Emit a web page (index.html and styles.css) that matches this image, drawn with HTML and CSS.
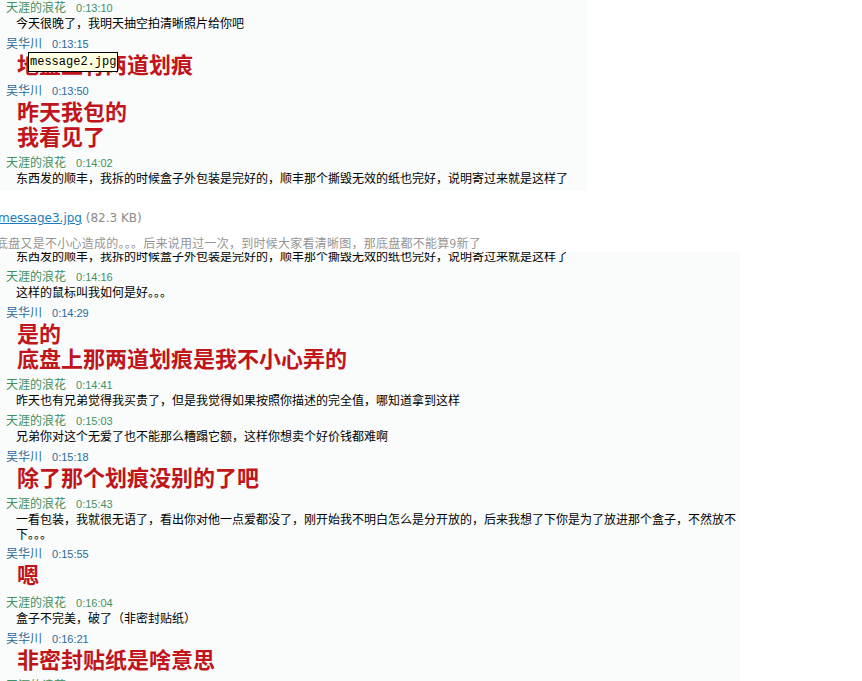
FILE: index.html
```html
<!DOCTYPE html>
<html lang="zh-CN">
<head>
  <meta charset="UTF-8">
  <title>message2.jpg / message3.jpg</title>
  <link rel="stylesheet" href="styles.css">
</head>
<body>

  <div class="post">

    <!-- 第一张截图 message2.jpg -->
    <div class="chat chat-first">
      <div class="item">
        <div class="head her">天涯的浪花<span class="time">0:13:10</span></div>
        <div class="msg">今天很晚了，我明天抽空拍清晰照片给你吧</div>
      </div>
      <div class="item item-big">
        <div class="head me">吴华川<span class="time">0:13:15</span></div>
        <div class="big">地盘上有两道划痕</div>
      </div>
      <div class="item item-big">
        <div class="head me">吴华川<span class="time">0:13:50</span></div>
        <div class="big">昨天我包的</div>
        <div class="big">我看见了</div>
      </div>
      <div class="item">
        <div class="head her">天涯的浪花<span class="time">0:14:02</span></div>
        <div class="msg">东西发的顺丰，我拆的时候盒子外包装是完好的，顺丰那个撕毁无效的纸也完好，说明寄过来就是这样了</div>
      </div>

      <div class="tip">message2.jpg</div>
    </div>

    <!-- 附件信息 -->
    <div class="attach">
      <a href="#" class="attach-link">message3.jpg</a> <span class="attach-size">(82.3 KB)</span>
    </div>
    <p class="note">底盘又是不小心造成的。。。后来说用过一次，到时候大家看清晰图，那底盘都不能算9新了</p>

    <!-- 第二张截图 message3.jpg -->
    <div class="chat chat-second">
      <div class="item item-cut">
        <div class="msg">东西发的顺丰，我拆的时候盒子外包装是完好的，顺丰那个撕毁无效的纸也完好，说明寄过来就是这样了</div>
      </div>
      <div class="item">
        <div class="head her">天涯的浪花<span class="time">0:14:16</span></div>
        <div class="msg">这样的鼠标叫我如何是好。。。</div>
      </div>
      <div class="item item-big">
        <div class="head me">吴华川<span class="time">0:14:29</span></div>
        <div class="big">是的</div>
        <div class="big">底盘上那两道划痕是我不小心弄的</div>
      </div>
      <div class="item">
        <div class="head her">天涯的浪花<span class="time">0:14:41</span></div>
        <div class="msg">昨天也有兄弟觉得我买贵了，但是我觉得如果按照你描述的完全值，哪知道拿到这样</div>
      </div>
      <div class="item">
        <div class="head her">天涯的浪花<span class="time">0:15:03</span></div>
        <div class="msg">兄弟你对这个无爱了也不能那么糟蹋它额，这样你想卖个好价钱都难啊</div>
      </div>
      <div class="item item-big">
        <div class="head me">吴华川<span class="time">0:15:18</span></div>
        <div class="big">除了那个划痕没别的了吧</div>
      </div>
      <div class="item item-wrap">
        <div class="head her">天涯的浪花<span class="time">0:15:43</span></div>
        <div class="msg">一看包装，我就很无语了，看出你对他一点爱都没了，刚开始我不明白怎么是分开放的，后来我想了下你是为了放进那个盒子，不然放不下。。。</div>
      </div>
      <div class="item item-big item-tall">
        <div class="head me">吴华川<span class="time">0:15:55</span></div>
        <div class="big">嗯</div>
      </div>
      <div class="item">
        <div class="head her">天涯的浪花<span class="time">0:16:04</span></div>
        <div class="msg">盒子不完美，破了（非密封贴纸）</div>
      </div>
      <div class="item item-big">
        <div class="head me">吴华川<span class="time">0:16:21</span></div>
        <div class="big">非密封贴纸是啥意思</div>
      </div>
      <div class="item">
        <div class="head her">天涯的浪花<span class="time">0:16:30</span></div>
      </div>
    </div>

  </div>

</body>
</html>
```

FILE: styles.css
```css
/* ===== General ===== */
body {
  margin: 0;
  padding: 0;
  background-color: #ffffff;
  font-family: "Noto Sans CJK SC", sans-serif;
  overflow: hidden;
}

.post {
  width: 862px;
}

/* ===== Chat screenshots ===== */
.chat {
  position: relative;
  background-color: #fafcfb;
  overflow: hidden;
  padding-left: 6px;
  box-sizing: border-box;
}

.chat-first {
  width: 587px;
  height: 192px;
  margin-top: -1px;
}

.chat-second {
  width: 740px;
  height: 440px;
  margin-top: 1px;
}

.item {
  padding-bottom: 4px;
}

.item-big {
  padding-bottom: 6px;
}

.item-tall {
  padding-bottom: 8px;
}

.item-cut {
  margin-top: -4px;
}

.head {
  font-size: 12px;
  line-height: 16px;
  height: 16px;
}

.head .time {
  font-family: "Liberation Sans", sans-serif;
  font-size: 11px;
  margin-left: 10px;
}

.her {
  color: #3f9064;
}

.me {
  color: #2a699b;
}

.msg {
  font-size: 12px;
  line-height: 16px;
  color: #000000;
  padding-left: 10px;
}

.item-wrap .msg {
  line-height: 15px;
}

.big {
  font-size: 22px;
  font-weight: 700;
  line-height: 25px;
  color: #bf151b;
  padding-left: 11px;
  white-space: nowrap;
}

/* tooltip over the first picture */
.tip {
  position: absolute;
  left: 28px;
  top: 53px;
  height: 18px;
  padding: 0 1px;
  border: 1px solid #000000;
  background-color: #ffffe1;
  font-family: "Liberation Mono", monospace;
  font-size: 12px;
  line-height: 18px;
  color: #000000;
}

/* ===== Attachment ===== */
.attach {
  margin: 18px 0 0 -2px;
  font-family: "DejaVu Sans", sans-serif;
  font-size: 12px;
  line-height: 18px;
}

.attach-link {
  color: #1b7bbd;
  text-decoration: underline;
}

.attach-size {
  color: #8a8a8a;
}

.note {
  margin: 8px 0 0 -4px;
  font-size: 12px;
  line-height: 16px;
  letter-spacing: 0.25px;
  color: #959595;
}
```
